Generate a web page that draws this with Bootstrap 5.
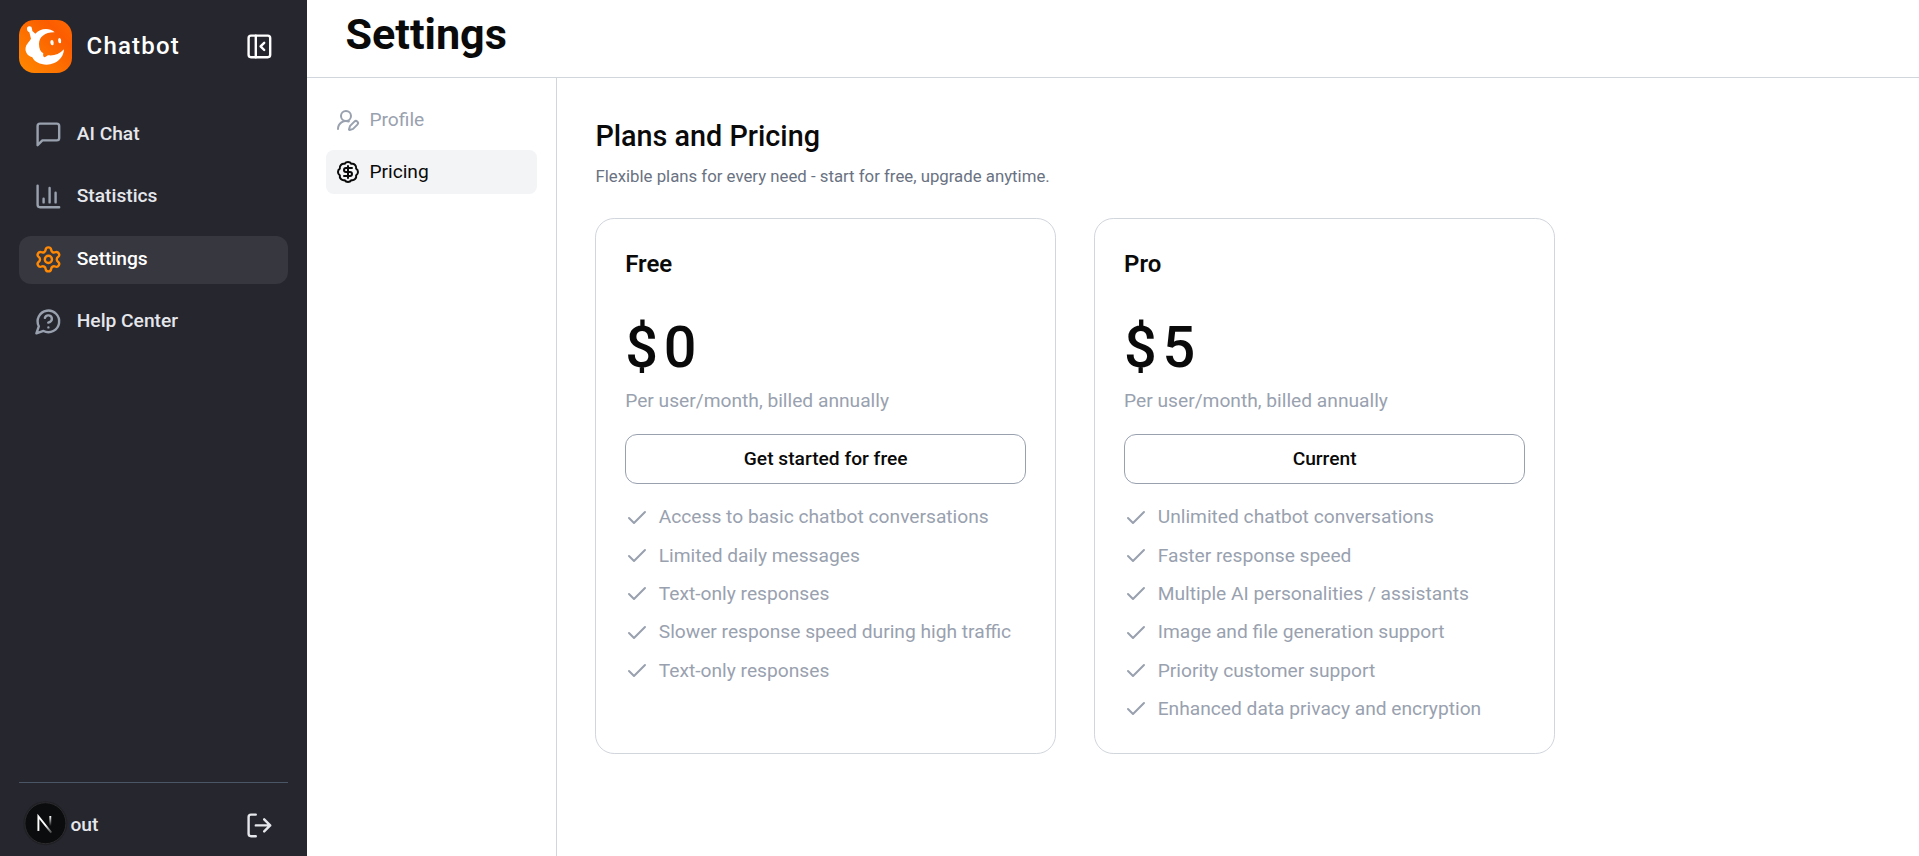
<!DOCTYPE html>
<html lang="en">
<head>
<meta charset="utf-8">
<meta name="viewport" content="width=device-width, initial-scale=1">
<title>Chatbot – Settings</title>
<link href="https://cdn.jsdelivr.net/npm/bootstrap@5.3.0/dist/css/bootstrap.min.css" rel="stylesheet">
<style>
  html { font-size: 1vw; }
  body { font-family: Roboto, "Liberation Sans", sans-serif; color: #0a0a0a; line-height: 1.5; background: #fff; }
  .sidebar { width: 16rem; background: #26262f; color: #e5e7eb; }
  .brand-row { padding-top: 20px; }
  .brand-name { font-size: 1.25rem; font-weight: 500; letter-spacing: .05em; color: #fff; line-height: 1.4; margin-left: .75rem; padding-top: 1px; }
  .brand-row .ico { margin-right: .75rem; }
  .side-list { margin-top: 38px; gap: .75rem; }
  .side-link { gap: .75rem; padding: .5rem .75rem calc(.5rem + 1px); border-radius: .625rem; color: #e5e7eb; font-weight: 500; text-decoration: none; height: 2.5rem; }
  .side-link .ico { color: #99a1af; }
  .side-link.active { background: #373740; color: #fff; }
  .side-link.active .ico { color: #ff8904; }
  .ico { width: 1.5rem; height: 1.5rem; fill: none; stroke: currentColor; stroke-width: 2; stroke-linecap: round; stroke-linejoin: round; flex: none; }
  .ico-sm { width: 1.25rem; height: 1.25rem; }
  .side-foot { border-top: 1px solid #4a5565; height: 74px; padding: 18px .75rem 0; }
  .side-foot > div { height: 2.5rem; font-weight: 500; }
  .dev-badge { left: 23px; top: 801px; }
  .page-head { height: 78px; border-bottom: 1px solid #d1d5dc; padding-left: 2rem; }
  .page-head h1 { font-size: 2.25rem; line-height: 2.5rem; font-weight: 700; margin-top: 11px; }
  .subnav { width: 250px; border-right: 1px solid #d1d5dc; gap: 8px; padding: 20px 1rem; }
  .subnav a { gap: .5rem; padding: .5rem; height: 44px; border-radius: .4rem; color: #99a1af; text-decoration: none; }
  .subnav a.active { background: #f3f4f6; color: #0a0a0a; }
  .plans { padding: 39.2px 2rem 2rem; }
  .plans h2 { font-size: 1.5rem; font-weight: 500; line-height: 2rem; }
  .lead-in { font-size: .875rem; line-height: 1.25rem; color: #6a7282; }
  .plan-row { gap: 2rem; }
  .plan { width: 24rem; height: 536px; border: 1px solid #d1d5dc; border-radius: 1rem; padding: 1.5rem; }
  .plan h3 { font-size: 1.25rem; line-height: 1.75rem; font-weight: 600; }
  .price { font-size: 3rem; line-height: 4rem; font-weight: 500; letter-spacing: .1em; }
  .muted { color: #99a1af; }
  .billing { margin-bottom: 18.4px; }
  .plan .btn { --bs-btn-border-color: #99a1af; --bs-btn-color: #0a0a0a; border-radius: .625rem; font-weight: 500; height: 50px; font-size: 1rem; }
  .plan ul { gap: .5rem; }
  .plan li { gap: .5rem; height: 1.5rem; }
</style>
</head>
<body class="vh-100 overflow-hidden">
<svg class="d-none">
  <symbol id="check" viewBox="0 0 24 24"><path d="M20 6 9 17l-5-5"/></symbol>
</svg>
<div class="d-flex h-100">
  <aside class="sidebar d-flex flex-column px-3 flex-shrink-0">
    <div class="brand-row d-flex align-items-center">
      <svg width="53" height="53" viewBox="0 0 159 159">
        <defs><linearGradient id="lg" x1="0" y1="1" x2="1" y2="0"><stop offset="0" stop-color="#ff8a00"/><stop offset=".75" stop-color="#fb5c00"/><stop offset="1" stop-color="#ff6a00"/></linearGradient></defs>
        <rect width="159" height="159" rx="46" fill="url(#lg)"/>
        <path fill="#fff" d="M24 27a7.500 7.500 0 0 1 15-1l1 7 9 8C62 26 90 21 107 37 80 36 60 50 60 72c0 14 5 24 13 28-1 4-1 8 2 12 5-1 8-4 12-6 18 2 34-3 48-18-1 25-22 46-52 46-20 0-38-9-43-22-17-5-25-20-18-36 4-8 10-12 14-20l-5-19c-4-2-7-5-7-10z"/>
        <ellipse cx="99" cy="68" rx="5" ry="8" fill="#fff" transform="rotate(-6 99 68)"/>
        <ellipse cx="122" cy="62" rx="4.500" ry="8" fill="#fff" transform="rotate(-6 122 62)"/>
      </svg>
      <span class="brand-name">Chatbot</span>
      <svg class="ico ms-auto text-white" viewBox="0 0 24 24"><rect x="3" y="3" width="18" height="18" rx="2"/><path d="M9 3v18M16 15l-3-3 3-3"/></svg>
    </div>
    <nav class="side-list d-flex flex-column">
      <a class="side-link d-flex align-items-center" href="#"><svg class="ico" viewBox="0 0 24 24"><path d="M21 15a2 2 0 0 1-2 2H7l-4 4V5a2 2 0 0 1 2-2h14a2 2 0 0 1 2 2z"/></svg>AI Chat</a>
      <a class="side-link d-flex align-items-center" href="#"><svg class="ico" viewBox="0 0 24 24"><path d="M3 3v16a2 2 0 0 0 2 2h16M18 17V9M13 17V5M8 17v-3"/></svg>Statistics</a>
      <a class="side-link active d-flex align-items-center" href="#"><svg class="ico" viewBox="0 0 24 24"><path d="M9.671 4.136a2.34 2.34 0 0 1 4.659 0 2.34 2.34 0 0 0 3.319 1.915 2.34 2.34 0 0 1 2.33 4.033 2.34 2.34 0 0 0 0 3.831 2.34 2.34 0 0 1-2.33 4.033 2.34 2.34 0 0 0-3.319 1.915 2.34 2.34 0 0 1-4.659 0 2.34 2.34 0 0 0-3.32-1.915 2.34 2.34 0 0 1-2.33-4.033 2.34 2.34 0 0 0 0-3.831A2.34 2.34 0 0 1 6.35 6.051a2.34 2.34 0 0 0 3.319-1.915"/><circle cx="12" cy="12" r="3"/></svg>Settings</a>
      <a class="side-link d-flex align-items-center" href="#"><svg class="ico" viewBox="0 0 24 24"><path d="M7.9 20A9 9 0 1 0 4 16.1L2 22ZM9.09 9a3 3 0 0 1 5.83 1c0 2-3 3-3 3M12 17h.01"/></svg>Help Center</a>
    </nav>
    <div class="side-foot mt-auto">
      <div class="d-flex align-items-center justify-content-between">Log out
        <svg class="ico" viewBox="0 0 24 24"><path d="M9 21H5a2 2 0 0 1-2-2V5a2 2 0 0 1 2-2h4M16 17l5-5-5-5M21 12H9"/></svg>
      </div>
    </div>
  </aside>
  <main class="flex-grow-1 d-flex flex-column">
    <header class="page-head"><h1 class="mb-0 d-inline-block">Settings</h1></header>
    <div class="d-flex flex-grow-1">
      <nav class="subnav d-flex flex-column">
        <a class="d-flex align-items-center" href="#"><svg class="ico ico-sm" viewBox="0 0 24 24"><path d="M2 21a8 8 0 0 1 10.821-7.487M21.378 16.626a1 1 0 0 0-3.004-3.004l-4.01 4.012a2 2 0 0 0-.506.854l-.837 2.87a.5.5 0 0 0 .62.62l2.87-.837a2 2 0 0 0 .854-.506z"/><circle cx="10" cy="8" r="5"/></svg>Profile</a>
        <a class="active d-flex align-items-center" href="#"><svg class="ico ico-sm" viewBox="0 0 24 24"><path d="M3.85 8.62a4 4 0 0 1 4.78-4.77 4 4 0 0 1 6.74 0 4 4 0 0 1 4.78 4.78 4 4 0 0 1 0 6.74 4 4 0 0 1-4.77 4.78 4 4 0 0 1-6.75 0 4 4 0 0 1-4.78-4.77 4 4 0 0 1 0-6.76ZM16 8h-6a2 2 0 1 0 0 4h4a2 2 0 1 1 0 4H8M12 18V6"/></svg>Pricing</a>
      </nav>
      <section class="plans">
        <h2 class="mb-2">Plans and Pricing</h2>
        <p class="lead-in mb-4">Flexible plans for every need - start for free, upgrade anytime.</p>
        <div class="plan-row d-flex">
          <article class="plan d-flex flex-column">
            <h3 class="mb-0">Free</h3>
            <div class="price mt-4">$0</div>
            <p class="muted billing">Per user/month, billed annually</p>
            <button class="btn w-100">Get started for free</button>
            <ul class="list-unstyled d-flex flex-column muted mt-3 mb-0">
              <li class="d-flex align-items-center"><svg class="ico ico-sm"><use href="#check"/></svg>Access to basic chatbot conversations</li>
              <li class="d-flex align-items-center"><svg class="ico ico-sm"><use href="#check"/></svg>Limited daily messages</li>
              <li class="d-flex align-items-center"><svg class="ico ico-sm"><use href="#check"/></svg>Text-only responses</li>
              <li class="d-flex align-items-center"><svg class="ico ico-sm"><use href="#check"/></svg>Slower response speed during high traffic</li>
              <li class="d-flex align-items-center"><svg class="ico ico-sm"><use href="#check"/></svg>Text-only responses</li>
            </ul>
          </article>
          <article class="plan d-flex flex-column">
            <h3 class="mb-0">Pro</h3>
            <div class="price mt-4">$5</div>
            <p class="muted billing">Per user/month, billed annually</p>
            <button class="btn w-100">Current</button>
            <ul class="list-unstyled d-flex flex-column muted mt-3 mb-0">
              <li class="d-flex align-items-center"><svg class="ico ico-sm"><use href="#check"/></svg>Unlimited chatbot conversations</li>
              <li class="d-flex align-items-center"><svg class="ico ico-sm"><use href="#check"/></svg>Faster response speed</li>
              <li class="d-flex align-items-center"><svg class="ico ico-sm"><use href="#check"/></svg>Multiple AI personalities / assistants</li>
              <li class="d-flex align-items-center"><svg class="ico ico-sm"><use href="#check"/></svg>Image and file generation support</li>
              <li class="d-flex align-items-center"><svg class="ico ico-sm"><use href="#check"/></svg>Priority customer support</li>
              <li class="d-flex align-items-center"><svg class="ico ico-sm"><use href="#check"/></svg>Enhanced data privacy and encryption</li>
            </ul>
          </article>
        </div>
      </section>
    </div>
  </main>
</div>
<!-- Dev tools indicator floating over the sidebar footer -->
<svg class="dev-badge position-fixed" width="45" height="45" viewBox="0 0 45 45">
  <defs>
    <linearGradient id="n1" gradientUnits="userSpaceOnUse" x1="24" y1="23" x2="29" y2="31"><stop stop-color="#fff"/><stop offset="1" stop-color="#fff" stop-opacity=".25"/></linearGradient>
    <linearGradient id="n2" gradientUnits="userSpaceOnUse" x1="0" y1="15" x2="0" y2="25"><stop stop-color="#fff"/><stop offset="1" stop-color="#fff" stop-opacity="0"/></linearGradient>
  </defs>
  <circle cx="22.4" cy="22.2" r="22" fill="#1f1f24"/>
  <circle cx="22.4" cy="22.2" r="20.5" fill="#0b0c0d" stroke="#2b2b2e"/>
  <path d="M15.4 30V15.500L28.300 31.600" fill="none" stroke="url(#n1)" stroke-width="1.9"/>
  <path d="M27.300 15v10.500" stroke="url(#n2)" stroke-width="1.9"/>
</svg>
<script src="https://cdn.jsdelivr.net/npm/bootstrap@5.3.0/dist/js/bootstrap.bundle.min.js"></script>
</body>
</html>
